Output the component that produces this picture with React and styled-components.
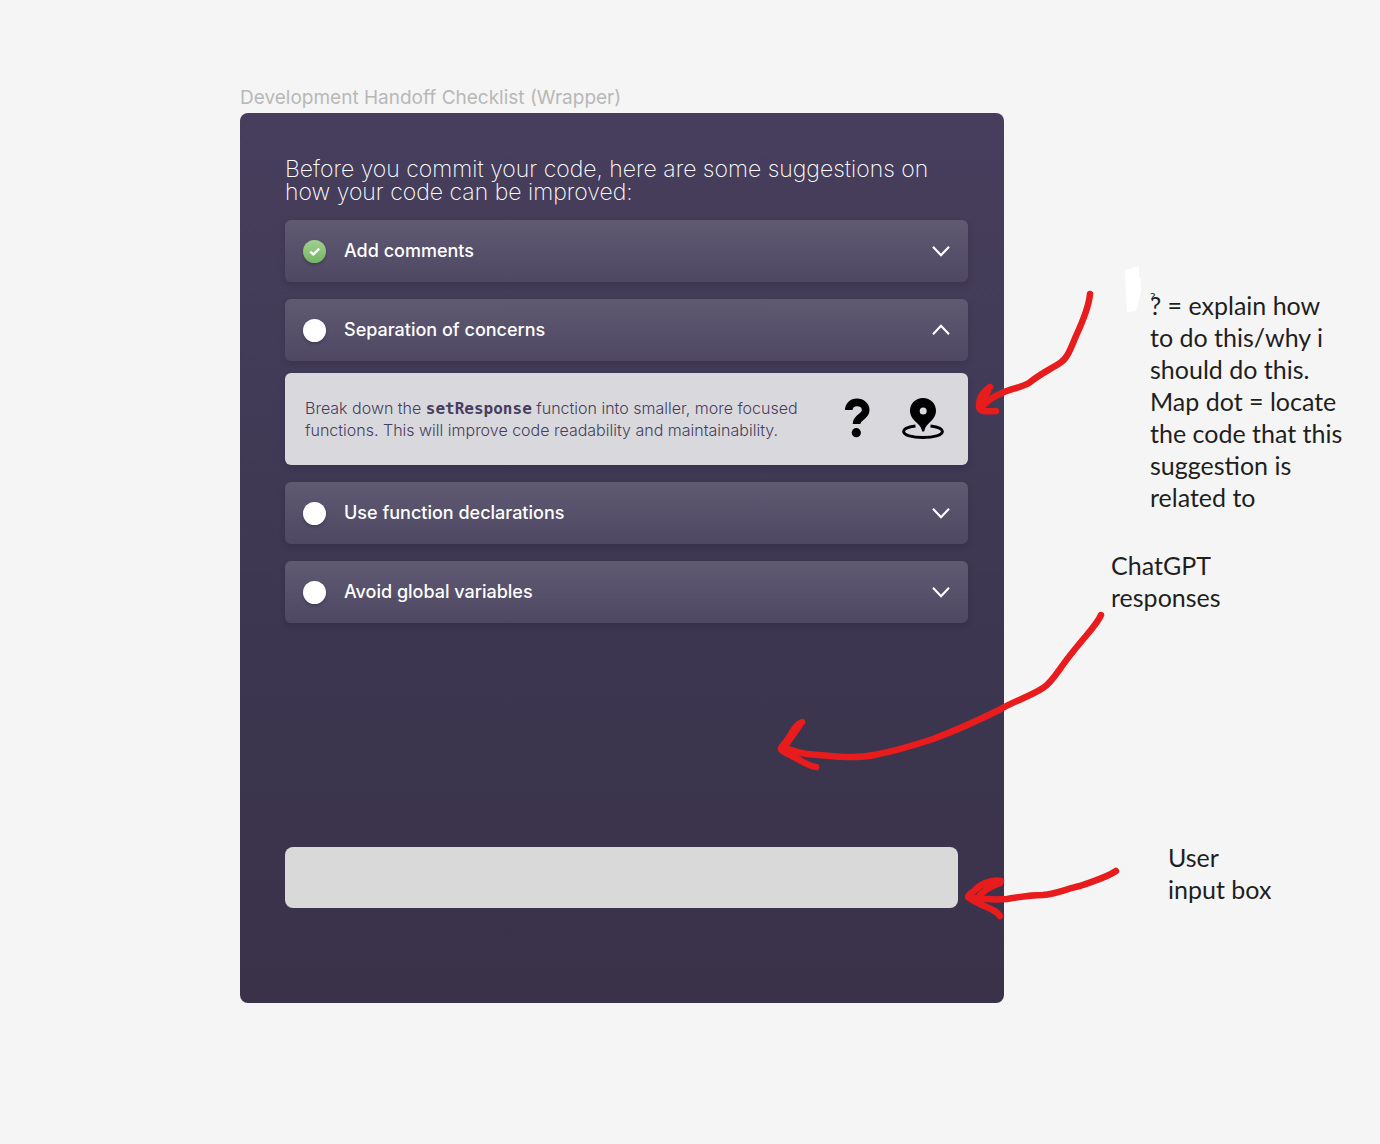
import React, { useState } from "react";
import styled, { createGlobalStyle } from "styled-components";

const Global = createGlobalStyle`
  * { box-sizing: border-box; }
  body { margin: 0; background: #f5f5f5; font-family: Inter, sans-serif; }
`;

const Canvas = styled.div`
  display: flex;
  align-items: flex-start;
  min-height: 100vh;
  padding: 86px 0 140px 240px;
`;

const Frame = styled.main`
  flex: 1;
  min-width: 480px;
`;

const FrameLabel = styled.div`
  height: 27px;
  color: #b8b8b8;
  font-size: 19px;
  line-height: 24px;
  white-space: nowrap;
`;

const Board = styled.section`
  display: flex;
  flex-direction: column;
  min-height: 890px;
  padding: 45px 36px 95px 45px;
  border-radius: 8px;
  background: linear-gradient(#463e5c, #433c58 25%, #3d3650 60%, #393249);
`;

const Heading = styled.h1`
  margin: 0 0 16px;
  color: #fff;
  font-size: 23px;
  font-weight: 200;
  line-height: 23px;
`;

const List = styled.ul`
  display: flex;
  flex-direction: column;
  gap: 17px;
  margin: 0;
  padding: 0;
  list-style: none;
`;

const Item = styled.li`
  display: flex;
  flex-direction: column;
  gap: 12px;
`;

const ItemHeader = styled.div`
  display: flex;
  align-items: center;
  gap: 18px;
  height: 62px;
  padding: 0 18px;
  border-radius: 6px;
  background: linear-gradient(#5f5972, #4f4863);
  box-shadow: 0 3px 6px rgba(30, 22, 45, 0.2);
`;

const TickWrap = styled.span`
  display: grid;
  width: 23px;
  height: 23px;
  > * { grid-area: 1 / 1; }
  svg { pointer-events: none; }
`;

const Tick = styled.input`
  appearance: none;
  width: 23px;
  height: 23px;
  margin: 0;
  border-radius: 50%;
  background: #fff;
  box-shadow: 0 2px 3px rgba(30, 22, 45, 0.3);
  &:checked { background: linear-gradient(#a2d091, #74b560); }
`;

const Toggle = styled.button`
  display: flex;
  flex: 1;
  align-items: center;
  justify-content: space-between;
  height: 100%;
  padding: 0;
  border: 0;
  background: none;
  color: #fff;
  font: 500 18px/22px Inter, sans-serif;
  text-align: left;
  cursor: pointer;
`;

const Detail = styled.div`
  display: flex;
  align-items: center;
  justify-content: space-between;
  min-height: 92px;
  padding: 0 23px 0 20px;
  border-radius: 6px;
  background: #d9d8dd;
  box-shadow: 0 3px 6px rgba(30, 22, 45, 0.2);
`;

const DetailText = styled.p`
  max-width: 510px;
  margin: 0;
  color: #463e5c;
  font-size: 16px;
  font-weight: 300;
  line-height: 22px;
`;

const Code = styled.code`
  font: 700 16px/20px "DejaVu Sans Mono", monospace;
`;

const Actions = styled.div`
  display: flex;
  gap: 32px;
`;

const IconButton = styled.button`
  display: flex;
  padding: 0;
  border: 0;
  background: none;
  color: #000;
  cursor: pointer;
`;

const Responses = styled.div`
  flex: 1;
  min-height: 224px;
`;

const ChatInput = styled.input`
  height: 61px;
  margin-right: 10px;
  padding: 0 20px;
  border: 0;
  border-radius: 8px;
  background: #d9d9d9;
  font: 400 18px/22px Inter, sans-serif;
`;

const Notes = styled.aside`
  position: relative;
  flex: 0 0 376px;
  padding-top: 203px;
`;

const Note = styled.p`
  margin: 0 0 ${(p) => p.$after}px;
  padding-left: ${(p) => p.$indent}px;
  color: #1f1f1f;
  font-family: Lato, sans-serif;
  font-size: 25px;
  line-height: 32px;
  white-space: nowrap;
`;

const StrayMark = styled.span`
  position: absolute;
  top: 205px;
  left: 146px;
  color: #1f1f1f;
  font: 400 12px/12px Lato, sans-serif;
`;

const Ink = styled.svg`
  position: absolute;
  top: -86px;
  left: -1004px;
  pointer-events: none;
`;

const Chevron = ({ open }) => (
  <svg width="18" height="12" viewBox="0 0 18 12" fill="none" stroke="#fff" strokeWidth="2.2">
    <path d={open ? "M1 10.2 9 1.8 17 10.2" : "M1 1.8 9 10.2 17 1.8"} />
  </svg>
);

const QuestionIcon = () => (
  <svg width="26" height="42" viewBox="844 399 26 42">
    <path
      d="M848.800 411C848.800 406.500 852.200 403.400 857 403.400S865.700 406.600 865.700 411.300C865.700 418.200 856.500 417.500 856.500 425"
      fill="none" stroke="currentColor" strokeWidth="7.600"
    />
    <circle cx="856.300" cy="433.700" r="4.600" fill="currentColor" />
  </svg>
);

const MapPinIcon = () => (
  <svg width="43" height="42" viewBox="902 398 43 42">
    <path
      fillRule="evenodd" fill="currentColor"
      d="M923 398C915.500 398 910 403.600 910 410.800C910 416.500 914 420.500 918 424C920.500 426.200 921.600 428.500 922.200 431.600H924.200C924.800 428.500 925.700 426.200 928.200 424C932 420.500 936 416.500 936 410.800C936 403.600 930.500 398 923 398ZM923.200 407.400A3.500 3.500 0 1 1 923.200 414.400A3.500 3.500 0 1 1 923.200 407.400Z"
    />
    <path
      d="M915.500 426C908.500 426.800 903.600 428.800 903.600 431.600C903.600 435.200 912.300 437.500 923 437.500S942.400 435.200 942.400 431.600C942.400 428.800 937.500 426.800 930.500 426"
      fill="none" stroke="currentColor" strokeWidth="3"
    />
  </svg>
);

const suggestions = [
  { id: "comments", title: "Add comments" },
  {
    id: "concerns",
    title: "Separation of concerns",
    detail: (
      <>
        Break down the <Code>setResponse</Code> function into smaller, more focused
        functions. This will improve code readability and maintainability.
      </>
    ),
  },
  { id: "functions", title: "Use function declarations" },
  { id: "globals", title: "Avoid global variables" },
];

export default function App() {
  const [open, setOpen] = useState("concerns");
  const [done, setDone] = useState({ comments: true });

  return (
    <>
      <Global />
      <Canvas>
        <Frame>
          <FrameLabel>Development Handoff Checklist (Wrapper)</FrameLabel>
          <Board>
            <Heading>
              Before you commit your code, here are some suggestions on
              <br />
              how your code can be improved:
            </Heading>
            <List>
              {suggestions.map(({ id, title, detail }) => (
                <Item key={id}>
                  <ItemHeader>
                    <TickWrap>
                      <Tick
                        type="checkbox"
                        aria-label={title}
                        checked={!!done[id]}
                        onChange={(e) => setDone({ ...done, [id]: e.target.checked })}
                      />
                      {done[id] && (
                        <svg width="23" height="23" viewBox="0 0 23 23" fill="none" stroke="#fff" strokeWidth="2.2">
                          <path d="M7.200 11.600 10.300 14.400 16.200 8.600" />
                        </svg>
                      )}
                    </TickWrap>
                    <Toggle aria-expanded={open === id} onClick={() => setOpen(open === id ? null : id)}>
                      {title}
                      <Chevron open={open === id} />
                    </Toggle>
                  </ItemHeader>
                  {open === id && detail && (
                    <Detail>
                      <DetailText>{detail}</DetailText>
                      <Actions>
                        <IconButton aria-label="Explain this suggestion"><QuestionIcon /></IconButton>
                        <IconButton aria-label="Locate the code"><MapPinIcon /></IconButton>
                      </Actions>
                    </Detail>
                  )}
                </Item>
              ))}
            </List>
            <Responses />
            <ChatInput aria-label="Your message" />
          </Board>
        </Frame>
        <Notes>
          <Note $indent={146} $after={36}>
            ? = explain how<br />to do this/why i<br />should do this.<br />Map dot = locate<br />
            the code that this<br />suggestion is<br />related to
          </Note>
          <Note $indent={107} $after={228}>ChatGPT<br />responses</Note>
          <Note $indent={164} $after={0}>User<br />input box</Note>
          <StrayMark>?</StrayMark>
          <Ink width="1380" height="1144" viewBox="0 0 1380 1144" fill="none" stroke="#e81c1c" strokeWidth="6.500" strokeLinecap="round" strokeLinejoin="round" aria-hidden="true">
            <path fill="#fff" stroke="none" d="M1125 270 1131 269 1132 267 1139 267 1139 277 1141 279 1141 290 1138 304 1136 311 1127 312 1126 295Z" />
            <path d="M1090 294C1089 306 1082 323 1076 336C1070 350 1067 359 1060 363C1049 370 1040 374 1029 383C1020 388 1010 389 1002 393C992 397 986 401 980 409" />
            <path d="M990 387C983 392 979 399 979 405C979 411 982 412 996 411M988 391 982 402" />
            <path d="M1101 615C1097 625 1085 636 1072 653C1060 667 1053 682 1043 688C1029 697 1014 701 999 710C973 723 957 730 933 739C909 747 890 752 874 755C854 759 830 756 807 754C796 753 788 747 781 749" />
            <path d="M802 722C795 724 791 736 784 744C778 750 782 751 792 756C804 762 808 766 816 767M800 725 786 745" />
            <path d="M1116 871C1106 878 1093 881 1080 886C1069 888 1056 894 1043 895C1029 895 1019 897 1007 899C995 900 980 899 968 897" />
            <path d="M1001 881C990 879 979 885 974 891C965 896 967 898 978 903C990 909 996 910 1000 916M1000 883C990 887 984 890 980 895" />
          </Ink>
        </Notes>
      </Canvas>
    </>
  );
}
